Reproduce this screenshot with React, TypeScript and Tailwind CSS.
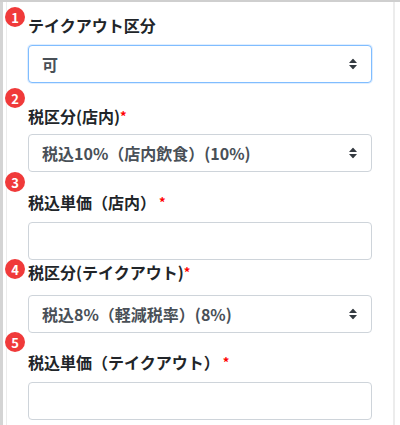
import React from 'react';

const font = { fontFamily: '"Noto Sans CJK JP", "Noto Sans", sans-serif' };

const Badge: React.FC<{ n: number; top: string }> = ({ n, top }) => (
  <div
    className={`absolute left-[5px] ${top} flex h-[20px] w-[20px] items-center justify-center rounded-full bg-[#f03a3a] text-[13px] font-bold leading-none text-white`}
  >
    {n}
  </div>
);

const Arrows: React.FC = () => (
  <svg width="8" height="11" viewBox="0 0 8 11" className="absolute right-[14px] top-1/2 -translate-y-1/2">
    <path d="M4 0 L8 4.5 L0 4.5 Z" fill="#343a40" />
    <path d="M0 6.5 L8 6.5 L4 11 Z" fill="#343a40" />
  </svg>
);

const Select: React.FC<{ value: string; focus?: boolean }> = ({ value, focus }) => (
  <div
    className={`relative flex h-[38px] w-[344px] items-center rounded-[4px] border bg-white pl-[13px] text-[16px] font-semibold text-[#495057] ${
      focus ? 'border-[#80bdff] shadow-[0_0_0_1px_rgba(128,189,255,0.25)]' : 'border-[#ced4da]'
    }`}
  >
    {value}
    <Arrows />
  </div>
);

const Input: React.FC = () => (
  <div className="h-[38px] w-[344px] rounded-[4px] border border-[#ced4da] bg-white" />
);

const Label: React.FC<{ text: string; req?: 'tight' | 'space' }> = ({ text, req }) => (
  <div className="h-[24px] text-[16px] font-bold leading-[24px] text-[#212529]">
    {text}
    {req === 'tight' && <span className="align-top text-[13px] text-[#ff0000]">*</span>}
    {req === 'space' && <span className="ml-[3px] align-top text-[13px] text-[#ff0000]">*</span>}
  </div>
);

export default function App() {
  return (
    <div className="relative h-[425px] w-[400px] overflow-hidden border-t-2 border-[#cfcfcf] bg-white" style={font}>
      <div className="absolute left-0 top-0 h-full w-[3px] bg-[#d4d4d4]" />
      <div className="absolute left-[6px] top-0 h-full w-px bg-[#ececec]" />
      <div className="absolute left-[393px] top-0 h-full w-[2px] bg-[#ececec]" />

      <div className="flex flex-col pl-[28px] pt-[11px]">
        <Label text="テイクアウト区分" />
        <div className="mt-[8px]">
          <Select value="可" focus />
        </div>

        <div className="mt-[21px]">
          <Label text="税区分(店内)" req="tight" />
        </div>
        <div className="mt-[6px]">
          <Select value="税込10%（店内飲食）(10%)" />
        </div>

        <div className="mt-[18px]">
          <Label text="税込単価（店内）" req="space" />
        </div>
        <div className="mt-[8px]">
          <Input />
        </div>

        <div className="mt-0">
          <Label text="税区分(テイクアウト)" req="tight" />
        </div>
        <div className="mt-[11px]">
          <Select value="税込8%（軽減税率）(8%)" />
        </div>

        <div className="mt-[17px]">
          <Label text="税込単価（テイクアウト）" req="space" />
        </div>
        <div className="mt-[8px]">
          <Input />
        </div>
      </div>

      <Badge n={1} top="top-[5px]" />
      <Badge n={2} top="top-[86px]" />
      <Badge n={3} top="top-[170px]" />
      <Badge n={4} top="top-[257px]" />
      <Badge n={5} top="top-[330px]" />
    </div>
  );
}
